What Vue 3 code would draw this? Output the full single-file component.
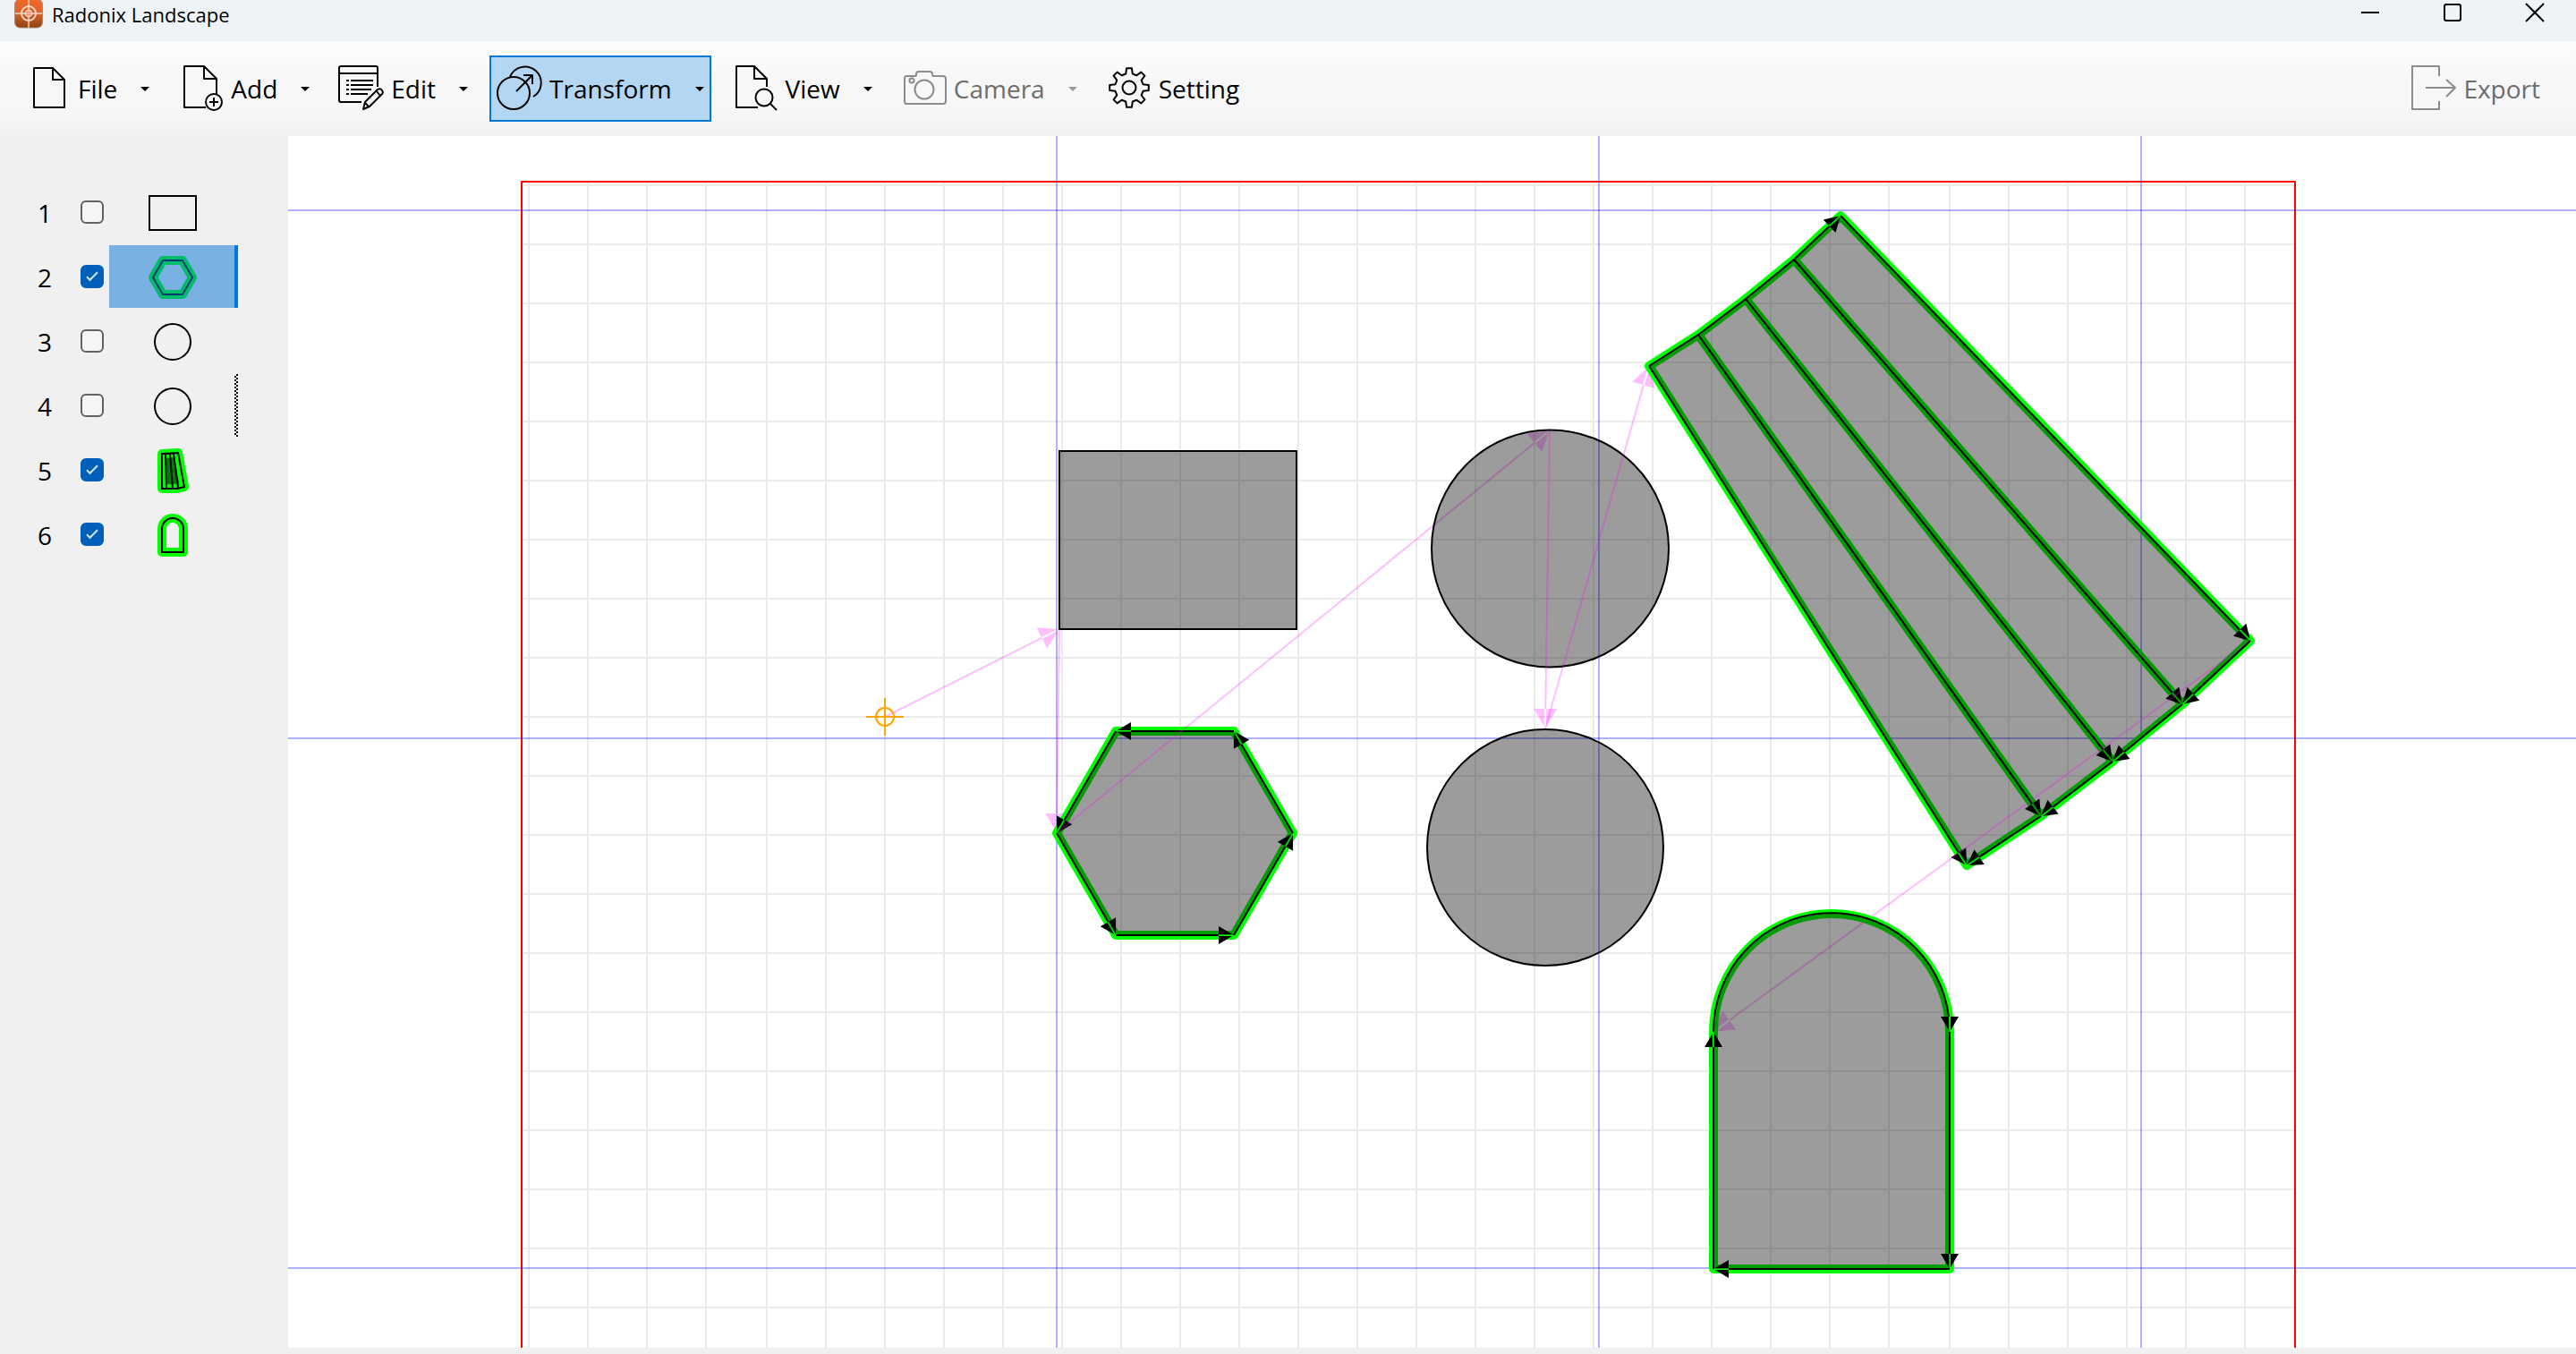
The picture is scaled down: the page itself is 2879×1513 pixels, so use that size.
<script setup>
import { ref } from 'vue'

const tools = [
  { name: 'File', icon: 'file', menu: true },
  { name: 'Add', icon: 'add', menu: true },
  { name: 'Edit', icon: 'edit', menu: true },
  { name: 'Transform', icon: 'transform', menu: true, active: true },
  { name: 'View', icon: 'view', menu: true },
  { name: 'Camera', icon: 'camera', menu: true, disabled: true },
  { name: 'Setting', icon: 'setting' },
]

const layers = ref([
  { id: 1, checked: false, kind: 'rect' },
  { id: 2, checked: true, kind: 'hexagon', selected: true },
  { id: 3, checked: false, kind: 'circle' },
  { id: 4, checked: false, kind: 'circle', focused: true },
  { id: 5, checked: true, kind: 'fan' },
  { id: 6, checked: true, kind: 'arch' },
])

// Gear outline: eight teeth around (26, 25)
function gear() {
  const points = []
  for (let i = 0; i < 8; i++) {
    const mid = (i * Math.PI) / 4 - Math.PI / 2
    for (const [r, off] of [[16, -0.24], [22, -0.13], [22, 0.13], [16, 0.24]]) {
      points.push(`${(26 + r * Math.cos(mid + off)).toFixed(1)} ${(25 + r * Math.sin(mid + off)).toFixed(1)}`)
    }
  }
  return `M${points.join('L')}Z`
}
const gearPath = gear()

// Work area grid
const gridX = [591, 657, 723, 789, 857, 923, 989]
for (let x = 1055; x <= 2111; x += 66) gridX.push(x)
for (let x = 2179; x <= 2509; x += 66) gridX.push(x)
const gridY = []
for (let y = 207; y <= 1461; y += 66) gridY.push(y)
const gridPath = gridX.map((x) => `M${x} 204V1600`).join('') + gridY.map((y) => `M584 ${y}H2564`).join('')
const guidesX = [1181, 1787, 2393]
const guidesY = [235, 825, 1417]

// Arrow head made of two halves, leaving the centre strip open
function head([x1, y1], [x2, y2], len, half) {
  const d = Math.hypot(x2 - x1, y2 - y1)
  const ux = (x2 - x1) / d
  const uy = (y2 - y1) / d
  const at = (back, side) =>
    `${(x2 - ux * back - uy * side).toFixed(1)} ${(y2 - uy * back + ux * side).toFixed(1)}`
  const tip = len / half
  return [1, -1].map((s) => `M${at(tip, s)}L${at(len, s * half)}L${at(len, s)}Z`).join('')
}
function shaft([x1, y1], [x2, y2], trim) {
  const d = Math.hypot(x2 - x1, y2 - y1)
  const k = (d - trim) / d
  return `M${x1} ${y1}L${(x1 + (x2 - x1) * k).toFixed(1)} ${(y1 + (y2 - y1) * k).toFixed(1)}`
}
const HEAD = 17
const travel = (a, b) => ({ line: shaft(a, b, 22), head: head(a, b, 22, 13) })
const tooling = (segments) => ({
  lines: segments.map(([a, b]) => shaft(a, b, HEAD)).join(''),
  heads: segments.map(([a, b]) => head(a, b, HEAD, 10)).join(''),
})

const hex = [[1181, 931], [1247, 817], [1379, 817], [1445, 931], [1379, 1045], [1247, 1045]]
const hexRoute = [0, 5, 4, 3, 2, 1, 0].map((i) => hex[i])
const hexOutline = `M${hex.map((p) => p.join(' ')).join('L')}Z`

const fanTop = [[1843, 409], [1898, 374], [1951, 334], [2005, 290], [2057, 241]]
const fanBottom = [[2198, 967], [2281, 912], [2361, 851], [2439, 787], [2515, 716]]
const fanOutline = `M${[...fanTop, ...[...fanBottom].reverse()].map((p) => p.join(' ')).join('L')}Z`
const fanRibs = [1, 2, 3].map((i) => `M${fanTop[i].join(' ')}L${fanBottom[i].join(' ')}`).join('')
const fanSegments = [
  ...fanTop.map((p, i) => [p, fanBottom[i]]),
  ...[4, 3, 2, 1].map((i) => [fanBottom[i], fanBottom[i - 1]]),
  [fanTop[3], fanTop[4]],
]
const fanTools = tooling(fanSegments)
fanTools.lines += `M${fanTop.slice(0, 4).map((p) => p.join(' ')).join('L')}`

const archTools = tooling([
  [[2179, 1153], [2179, 1418]],
  [[2179, 1418], [1915, 1418]],
  [[1915, 1418], [1915, 1153]],
])
archTools.lines += 'M1915 1153A132 132 0 0 1 2178 1136'
archTools.heads += head([2179, 1100], [2179, 1153], HEAD, 10)

const shapes = [
  { travel: travel([989, 801], [1184, 703]), outline: 'M1184 504H1449V703H1184Z' },
  {
    travel: travel([1184, 703], [1181, 931]),
    outline: hexOutline,
    tools: tooling(hexRoute.slice(1).map((p, i) => [hexRoute[i], p])),
  },
  { travel: travel([1181, 931], [1732, 481]), outline: 'M1600 613a132 132 0 1 1 265 0a132 132 0 1 1 -265 0Z' },
  { travel: travel([1732, 481], [1727, 814]), outline: 'M1595 947a132 132 0 1 1 264 0a132 132 0 1 1 -264 0Z' },
  { travel: travel([1727, 814], [1843, 409]), outline: fanOutline, ribs: fanRibs, tools: fanTools },
  {
    travel: travel([2515, 716], [1915, 1153]),
    outline: 'M1915 1153A132 132 0 0 1 2179 1153V1418H1915Z',
    tools: archTools,
  },
]
</script>

<template>
  <div class="window">
    <header class="titlebar">
      <svg class="logo" width="32" height="32" viewBox="0 0 32 32" aria-hidden="true">
        <defs>
          <linearGradient id="logo-fill" x1="0" y1="0" x2="0" y2="1">
            <stop offset="0" stop-color="#f4682a" />
            <stop offset="0.5" stop-color="#d9622a" />
            <stop offset="1" stop-color="#8a4312" />
          </linearGradient>
        </defs>
        <rect x="0.5" y="-1" width="31" height="32" rx="6" fill="url(#logo-fill)" stroke="#a98b78" />
        <g fill="none" stroke="#f6d9c8" stroke-width="2">
          <circle cx="16" cy="15" r="8" />
          <circle cx="16" cy="15" r="3.5" stroke-width="1.6" />
          <path d="M16 0V31M1 15H31" stroke-opacity="0.7" />
        </g>
      </svg>
      <span class="title">Radonix Landscape</span>
      <div class="window-buttons">
        <button type="button" aria-label="Minimize">
          <svg width="24" height="24" viewBox="0 0 24 24"><path d="M2 12H22" /></svg>
        </button>
        <button type="button" aria-label="Maximize">
          <svg width="24" height="24" viewBox="0 0 24 24"><rect x="3" y="3" width="18" height="18" rx="2" /></svg>
        </button>
        <button type="button" aria-label="Close">
          <svg width="24" height="24" viewBox="0 0 24 24"><path d="M2 2L22 22M22 2L2 22" /></svg>
        </button>
      </div>
    </header>

    <nav class="toolbar" aria-label="Main">
      <button
        v-for="tool in tools"
        :key="tool.name"
        type="button"
        class="tool"
        :class="{ active: tool.active }"
        :disabled="tool.disabled"
      >
        <svg class="icon" width="52" height="52" viewBox="0 0 52 52" aria-hidden="true">
          <g v-if="tool.icon === 'file'">
            <path d="M10 3H31L44 16V47H10Z" />
            <path d="M31 3V16H44" />
          </g>
          <g v-else-if="tool.icon === 'add'">
            <path d="M31 47H7V1H29L43 15V32" />
            <path d="M29 1V15H43" />
            <circle cx="40" cy="41" r="9" />
            <path d="M40 36V46M35 41H45" />
          </g>
          <g v-else-if="tool.icon === 'edit'">
            <path d="M44 24V3Q44 1 42 1H3Q1 1 1 3V39Q1 41 3 41H26" />
            <path d="M1 9H44" />
            <path d="M9 17H12M14 17H39M9 22H12M14 22H39M9 27H12M14 27H37M9 32H12M14 32H33" />
            <path d="M28 49L30 41L44 27Q47 25 49 28Q51 31 48 33L35 46ZM43 29L47 34M30 42L34 46" />
          </g>
          <g v-else-if="tool.icon === 'transform'">
            <circle cx="19" cy="31" r="18" />
            <path d="M15 13A18 18 0 1 1 41 35" />
            <path d="M22 29L40 11M30 11H40V21" />
          </g>
          <g v-else-if="tool.icon === 'view'">
            <path d="M28 47H4V1H24L38 15V24" />
            <path d="M24 1V15H38" />
            <circle cx="35" cy="36" r="9.5" />
            <path d="M42 43L49 50" />
          </g>
          <g v-else-if="tool.icon === 'camera'">
            <path d="M6 12H16Q17 12 17 10Q17 7 20 7H32Q35 7 35 10Q35 12 36 12H47Q50 12 50 15V40Q50 43 47 43H6Q4 43 4 40V15Q4 12 6 12Z" />
            <circle cx="26" cy="27" r="10.5" />
            <circle cx="12" cy="17" r="2.5" />
          </g>
          <g v-else>
            <path :d="gearPath" />
            <circle cx="26" cy="25" r="7.5" />
          </g>
        </svg>
        <span>{{ tool.name }}</span>
        <span v-if="tool.menu" class="caret"></span>
      </button>

      <button type="button" class="tool export" disabled>
        <svg class="icon" width="52" height="52" viewBox="0 0 52 52" aria-hidden="true">
          <path d="M32 12V1H2V49H32V40" />
          <path d="M17 25H50M40 16L50 25L40 35" />
        </svg>
        <span>Export</span>
      </button>
    </nav>

    <div class="body">
      <ul class="layers">
        <li v-for="layer in layers" :key="layer.id" class="layer">
          <label :for="`layer-${layer.id}`">{{ layer.id }}</label>
          <input :id="`layer-${layer.id}`" v-model="layer.checked" type="checkbox" />
          <span class="thumb" :class="{ selected: layer.selected, focused: layer.focused }">
            <svg width="58" height="54" viewBox="0 0 58 54" aria-hidden="true">
              <rect v-if="layer.kind === 'rect'" class="plain" x="3" y="8" width="52" height="38" />
              <circle v-else-if="layer.kind === 'circle'" class="plain" cx="29" cy="27" r="20" />
              <template v-else-if="layer.kind === 'hexagon'">
                <path class="halo" d="M7 27L18 8H40L51 27L40 46H18Z" />
                <path class="edge" d="M7 27L18 8H40L51 27L40 46H18Z" />
              </template>
              <template v-else-if="layer.kind === 'fan'">
                <path class="glow" d="M17 8L35 7L42 45L34 47L17 47Z" fill="#008000" />
                <path class="line" d="M17 8L35 7L42 45L34 47L17 47ZM21 8L22 47M26 8L29 47M30 8L35 46" />
              </template>
              <template v-else>
                <path class="glow" d="M17 46V20A12 12 0 0 1 41 20V46Z" fill="none" />
                <path class="line" d="M17 46V20A12 12 0 0 1 41 20V46Z" />
              </template>
            </svg>
          </span>
        </li>
      </ul>

      <main class="canvas">
        <svg width="100%" height="100%" role="img" aria-label="Work area">
          <g transform="translate(-322 -152)">
            <path d="M583 1600V203H2565V1600" fill="none" stroke="#ff0000" stroke-width="2" />
            <path :d="gridPath" stroke="#000000" stroke-opacity="0.08" stroke-width="2" />
            <g stroke="#0000ff" stroke-opacity="0.31" stroke-width="2">
              <line v-for="x in guidesX" :key="x" :x1="x" y1="0" :x2="x" y2="3000" />
              <line v-for="y in guidesY" :key="y" x1="0" :y1="y" x2="6000" :y2="y" />
            </g>
            <g v-for="(shape, i) in shapes" :key="i">
              <path class="travel-line" :d="shape.travel.line" />
              <path class="travel-head" :d="shape.travel.head" />
              <path v-if="shape.tools" class="selection" :d="shape.outline + (shape.ribs || '')" />
              <path class="fill" :d="shape.outline" />
              <template v-if="shape.tools">
                <path class="tool-line" :d="shape.tools.lines" />
                <path :d="shape.tools.heads" />
              </template>
              <path v-else class="tool-line" :d="shape.outline" />
            </g>
            <g fill="none" stroke="#ffa500" stroke-width="2">
              <circle cx="989" cy="801" r="10" />
              <path d="M968 801H1010M989 780V822" />
            </g>
          </g>
        </svg>
      </main>
    </div>
  </div>
</template>

<style>
body {
  margin: 0;
}
</style>

<style scoped>
.window {
  display: flex;
  flex-direction: column;
  height: 100vh;
  background: #f0f0f0;
  color: #000;
  font-family: 'Open Sans', 'Noto Sans', sans-serif;
  font-size: 28px;
}

.titlebar {
  display: flex;
  flex: none;
  height: 46px;
  padding-left: 16px;
  background: #eef3f8;
}

.title {
  padding-left: 10px;
  font-size: 22px;
  line-height: 32px;
}

.window-buttons {
  display: flex;
  margin-left: auto;
}

.window-buttons button {
  display: flex;
  justify-content: center;
  width: 92px;
  padding: 2px 0 0;
  border: 0;
  background: none;
}

.window-buttons svg {
  fill: none;
  stroke: #000;
  stroke-width: 2;
}

.toolbar {
  display: flex;
  flex: none;
  align-items: center;
  gap: 16px;
  box-sizing: border-box;
  height: 106px;
  padding: 0 32px 0 20px;
  background: linear-gradient(#fdfdfd, #f7f7f7 40%, #f7f7f7 75%, #f0f0f0);
}

.tool {
  display: flex;
  align-items: center;
  box-sizing: border-box;
  height: 74px;
  padding: 0 6px;
  border: 2px solid transparent;
  background: none;
  color: inherit;
  font: inherit;
}

.tool.active {
  border-color: #0078d7;
  background: #b3d6f2;
}

.tool:disabled {
  color: #6d6d6d;
}

.icon {
  flex: none;
  margin-right: 7px;
  overflow: visible;
  fill: none;
  stroke: #000;
  stroke-width: 2;
  stroke-linejoin: round;
}

.tool:disabled .icon {
  stroke: #8c8c8c;
}

.caret {
  margin-left: 26px;
  border: 5px solid transparent;
  border-top-color: currentColor;
  border-bottom-width: 0;
}

.tool:disabled .caret {
  border-top-color: #9a9a9a;
}

.export {
  margin-left: auto;
}

.body {
  display: flex;
  flex: 1;
  min-height: 0;
  padding-bottom: 7px;
}

.layers {
  display: flex;
  flex: none;
  flex-direction: column;
  gap: 2px;
  box-sizing: border-box;
  width: 322px;
  margin: 0;
  padding: 50px 0 0 42px;
  list-style: none;
}

.layer {
  display: flex;
  align-items: center;
  height: 70px;
}

.layer label {
  width: 48px;
  padding-top: 2px;
}

.layer input {
  display: flex;
  justify-content: center;
  flex: none;
  box-sizing: border-box;
  width: 26px;
  height: 26px;
  margin: 0 6px 0 0;
  border: 2px solid #626262;
  border-radius: 6px;
  background: #f5f5f5;
  appearance: none;
}

.layer input:checked {
  border-color: #005fb8;
  background: #005fb8;
}

.layer input:checked::after {
  width: 4px;
  height: 11px;
  margin-top: 3px;
  border: solid #d4e5f4;
  border-width: 0 2px 2px 0;
  content: '';
  transform: rotate(45deg);
}

.thumb {
  display: flex;
  align-items: center;
  justify-content: center;
  box-sizing: border-box;
  width: 144px;
  height: 70px;
  padding: 2px 0 0 2px;
  border-right: 4px solid transparent;
}

.thumb.selected {
  border-right-color: #0078d7;
  background: #78b1e2;
}

.thumb.focused {
  background: repeating-conic-gradient(#000 0 25%, #fff 0 50%) right top / 4px 4px repeat-y border-box;
}

.thumb svg {
  fill: none;
  stroke-width: 2;
}

.plain,
.line {
  stroke: #000;
}

.halo {
  stroke: #00bb6c;
  stroke-width: 10;
  stroke-linejoin: round;
}

.edge {
  stroke: #003c6c;
}

.glow {
  stroke: #00ff00;
  stroke-width: 10;
  stroke-linejoin: round;
}

.canvas {
  flex: 1;
  min-width: 0;
  overflow: hidden;
  background: #fff;
}

.canvas svg {
  display: block;
}

.travel-line {
  fill: none;
  stroke: #ff00ff;
  stroke-opacity: 0.25;
  stroke-width: 2;
}

.travel-head {
  fill: #ff00ff;
  fill-opacity: 0.25;
}

.selection {
  fill: none;
  stroke: #00ff00;
  stroke-width: 10;
  stroke-linejoin: round;
}

.fill {
  fill: #000;
  fill-opacity: 0.39;
}

.tool-line {
  fill: none;
  stroke: #000;
  stroke-width: 2;
}
</style>
